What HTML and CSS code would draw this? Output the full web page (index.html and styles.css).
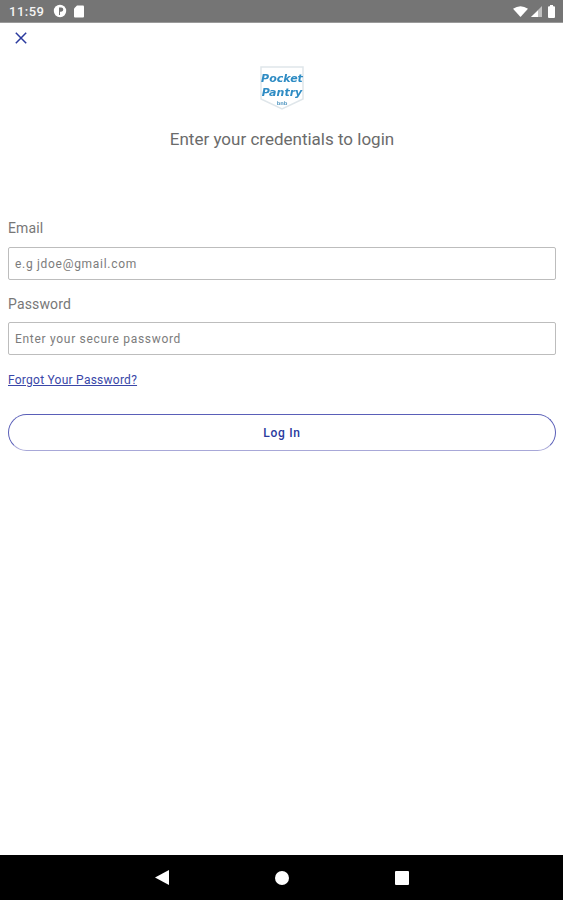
FILE: index.html
```html
<!DOCTYPE html>
<html lang="en">
<head>
<meta charset="utf-8">
<title>Login</title>
<link rel="stylesheet" href="styles.css">
</head>
<body>
<div class="screen">
  <header class="status">
    <div class="status-left">
      <span class="time">11:59</span>
      <svg class="ic-p" width="14" height="14" viewBox="0 0 14 14"><circle cx="7" cy="7" r="6.200" fill="#fff"/><path d="M6 3.500h2.200a2 2 0 0 1 0 4.200H7V11H6z" fill="#757575"/></svg>
      <svg class="ic-sd" width="10" height="13" viewBox="0 0 10 13"><path d="M3 .5h6a1 1 0 0 1 1 1v10a1 1 0 0 1-1 1H1a1 1 0 0 1-1-1V3.500z" fill="#fff"/></svg>
    </div>
    <div class="status-right">
      <svg width="15" height="11" viewBox="0 0 15 11"><path d="M0 2.800Q7.500-2.200 15 2.800L7.500 11z" fill="#fff"/></svg>
      <svg width="11" height="11" viewBox="0 0 11 11"><path d="M11 0v11H0z" fill="#fff" opacity=".55"/><path d="M7 4.500V11H0z" fill="#fff"/></svg>
      <svg class="ic-bat" width="7" height="13" viewBox="0 0 7 13"><path d="M2 0h3v1.200h1a1 1 0 0 1 1 1V12a1 1 0 0 1-1 1H1a1 1 0 0 1-1-1V2.200a1 1 0 0 1 1-1h1z" fill="#fff"/></svg>
    </div>
  </header>

  <main class="content">
    <div class="close-row">
      <svg width="12" height="12" viewBox="0 0 12 12"><path d="M.8.800l10.400 10.400M11.200.800L.8 11.200" stroke="#2a3a9e" stroke-width="1.500" fill="none"/></svg>
    </div>
    <div class="logo-row">
      <svg class="logo" width="46" height="46" viewBox="0 0 46 46">
        <path d="M2 2h42v32L23 44 2 34z" fill="#fff" stroke="#dfe6ea" stroke-width="1.500"/>
        <text x="23" y="17" text-anchor="middle" class="logo-text">Pocket</text>
        <text x="23" y="31" text-anchor="middle" class="logo-text">Pantry</text>
        <text x="23" y="40" text-anchor="middle" class="logo-small">bnb</text>
      </svg>
    </div>
    <h1 class="title">Enter your credentials to login</h1>

    <form class="form">
      <label class="label">Email</label>
      <div class="input input-first">e.g jdoe@gmail.com</div>
      <label class="label label-second">Password</label>
      <div class="input">Enter your secure password</div>
      <a class="forgot" href="#">Forgot Your Password?</a>
      <button class="login" type="button">Log In</button>
    </form>
  </main>

  <nav class="navbar">
    <svg width="14" height="15" viewBox="0 0 14 15"><path d="M14 0v15L0 7.500z" fill="#fff"/></svg>
    <svg width="14" height="14" viewBox="0 0 14 14"><circle cx="7" cy="7" r="7" fill="#fff"/></svg>
    <svg width="14" height="14" viewBox="0 0 14 14"><rect width="14" height="14" rx="1" fill="#fff"/></svg>
  </nav>
</div>
</body>
</html>
```
FILE: styles.css
```css
* { box-sizing: border-box; }
html, body { margin: 0; padding: 0; }
body { background: #fff; font-family: Roboto, "Liberation Sans", sans-serif; }

.screen {
  width: 563px;
  height: 900px;
  display: flex;
  flex-direction: column;
  overflow: hidden;
}

.status {
  height: 23px;
  flex: none;
  background: #757575;
  border-bottom: 1px solid #9a9a9a;
  display: flex;
  align-items: center;
  justify-content: space-between;
  padding: 0 8px 0 9px;
}
.status-left, .status-right { display: flex; align-items: center; }
.time {
  color: #f4f4f4;
  font-size: 13px;
  font-weight: 500;
  letter-spacing: .5px;
  margin-right: 9px;
}
.ic-p { margin-right: 7px; }
.status-right { gap: 3px; }
.ic-bat { margin-left: 3px; }

.content { flex: 1; padding: 0 7px 0 8px; }

.close-row { display: flex; padding: 9px 0 0 7px; height: 42px; }

.logo-row { display: flex; justify-content: center; height: 46px; }
.logo { filter: blur(.6px); }
.logo-text {
  font-family: "DejaVu Sans", sans-serif;
  font-size: 11px;
  font-style: italic;
  font-weight: 700;
  fill: #2f8cc4;
}
.logo-small {
  font-family: "DejaVu Sans", sans-serif;
  font-size: 5px;
  font-weight: 700;
  fill: #5b9cc4;
}

.title {
  margin: 16px 0 0;
  text-align: center;
  font-size: 17px;
  line-height: 24px;
  font-weight: 400;
  color: #6b6b6b;
}

.form { display: flex; flex-direction: column; margin-top: 67px; }

.label {
  font-size: 14px;
  line-height: 20px;
  letter-spacing: .15px;
  color: #777;
}
.label-second { margin-top: 14px; }

.input {
  margin-top: 8px;
  height: 33px;
  border: 1.500px solid #bdbdbd;
  border-radius: 2px;
  padding: 0 6px;
  display: flex;
  align-items: center;
  font-size: 12px;
  letter-spacing: .7px;
  color: #7c7c7c;
}
.input-first { margin-top: 9px; }

.forgot {
  margin-top: 17px;
  font-size: 12px;
  line-height: 16px;
  letter-spacing: .25px;
  color: #3a47a8;
  text-decoration: underline;
}

.login {
  margin-top: 26px;
  height: 37px;
  border: 1.500px solid #5a5fb8;
  border-bottom-color: #a8a8d8;
  border-radius: 19px;
  background: #fff;
  font-family: Roboto, "Liberation Sans", sans-serif;
  font-size: 12px;
  font-weight: 500;
  letter-spacing: .7px;
  color: #2a3a9e;
}

.navbar {
  height: 45px;
  flex: none;
  background: #000;
  display: flex;
  align-items: center;
  justify-content: center;
  gap: 106px;
}
```
